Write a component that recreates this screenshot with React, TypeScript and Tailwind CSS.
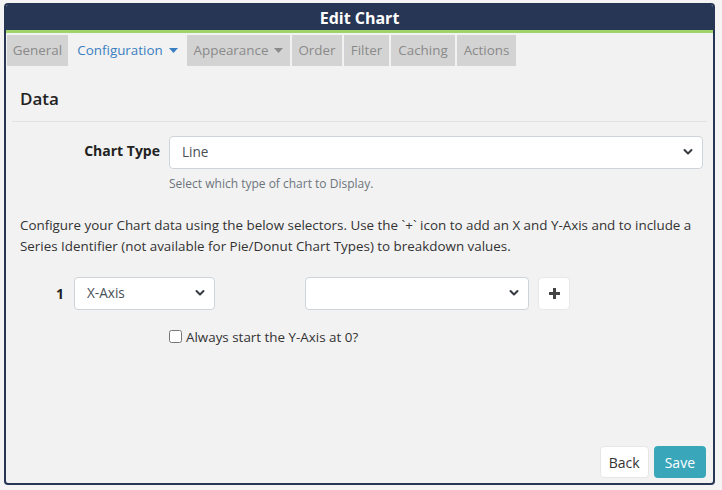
import { useState } from "react";

const TABS = [
  { key: "general", label: "General", w: "w-[61px]" },
  { key: "configuration", label: "Configuration", w: "w-[115px]", caret: true },
  { key: "appearance", label: "Appearance", w: "w-[103px]", caret: true },
  { key: "order", label: "Order", w: "w-[50px]" },
  { key: "filter", label: "Filter", w: "w-[45px]" },
  { key: "caching", label: "Caching", w: "w-[64px]" },
  { key: "actions", label: "Actions", w: "w-[59px]" },
] as const;

function Caret({ className }: { className?: string }) {
  return (
    <svg width="9" height="5" viewBox="0 0 9 5" className={className}>
      <path d="M0 0h9L4.5 5z" fill="currentColor" />
    </svg>
  );
}

function Chevron() {
  return (
    <svg
      width="10"
      height="7"
      viewBox="0 0 10 7"
      className="pointer-events-none absolute right-[10px] top-1/2 -translate-y-1/2 text-[#343a40]"
    >
      <path d="M1.5 1.5 5 5l3.5-3.5" fill="none" stroke="currentColor" strokeWidth="2" strokeLinecap="round" strokeLinejoin="round" />
    </svg>
  );
}

/** 下拉選單（註解：原生 select 搭配自繪箭頭）。 */
function Select({ value, options, className }: { value: string; options: string[]; className?: string }) {
  const [v, setV] = useState(value);
  return (
    <div className={`relative ${className ?? ""}`}>
      <select
        value={v}
        onChange={(e) => setV(e.target.value)}
        className="h-[33px] w-full appearance-none rounded-[4px] border border-[#ced4da] bg-white pl-[12px] pr-8 text-[13.6px] text-[#495057] outline-none"
      >
        {options.map((o) => (
          <option key={o} value={o}>
            {o}
          </option>
        ))}
      </select>
      <Chevron />
    </div>
  );
}

export default function App() {
  const [tab] = useState("configuration");

  return (
    <div className="min-h-screen bg-[#f4f4f4] pl-[4px] pt-[3px] font-['Open_Sans','Noto_Sans',sans-serif]">
      <div className="flex h-[482px] w-[711px] flex-col overflow-hidden rounded-[4px] border-2 border-[#283655] bg-[#f2f2f2]">
        <div className="flex h-[25px] items-center justify-center bg-[#283655] text-[16px] font-bold text-white">
          Edit Chart
        </div>
        <div className="h-[3px] bg-[#a0d468]" />

        <div className="flex gap-[2px] pl-[1px] pt-[2px]">
          {TABS.map((t) => {
            const active = t.key === tab;
            return (
              <div
                key={t.key}
                className={`flex h-[31px] items-center justify-center whitespace-nowrap text-[13.4px] ${t.w} ${
                  active ? "text-[#3a7fc1]" : "bg-[#d3d3d3] text-[#8a8a8a]"
                }`}
              >
                {t.label}
                {"caret" in t && t.caret ?
                  <Caret className={`ml-[6px] ${active ? "text-[#3a7fc1]" : "text-[#8a8a8a]"}`} />
                : null}
              </div>
            );
          })}
        </div>

        <div className="flex flex-1 flex-col">
          <h3 className="px-[14px] pt-[20px] text-[17px] font-semibold text-[#222]">Data</h3>
          <div className="mx-[6px] mt-[9px] border-t border-[#e2e2e2]" />

          <div className="mt-[14px] flex items-start">
            <label className="w-[154px] pt-[4px] text-right text-[14px] font-bold text-[#222]">Chart Type</label>
            <div className="ml-[9px] w-[534px]">
              <Select value="Line" options={["Line", "Bar", "Pie", "Donut"]} />
              <p className="mt-[6px] text-[12px] text-[#6c757d]">Select which type of chart to Display.</p>
            </div>
          </div>

          <p className="mt-[22px] px-[14px] text-[13.4px] leading-[21px] text-[#333]">
            Configure your Chart data using the below selectors. Use the `+` icon to add an X and Y-Axis and to include a
            Series Identifier (not available for Pie/Donut Chart Types) to breakdown values.
          </p>

          <div className="mt-[20px] flex items-center">
            <span className="w-[58px] text-right text-[14px] font-bold text-[#222]">1</span>
            <Select value="X-Axis" options={["X-Axis", "Y-Axis", "Series"]} className="ml-[10px] w-[141px]" />
            <Select value="" options={[""]} className="ml-[90px] w-[224px]" />
            <button className="ml-[9px] flex h-[33px] w-[32px] items-center justify-center rounded-[4px] border border-[#e8e8e8] bg-white">
              <svg width="11" height="11" viewBox="0 0 11 11">
                <path d="M5.5 0v11M0 5.5h11" stroke="#444" strokeWidth="3" />
              </svg>
            </button>
          </div>

          <label className="ml-[163px] mt-[17px] flex items-center gap-[4px] text-[13.4px] text-[#333]">
            <input type="checkbox" className="h-[13px] w-[13px]" />
            Always start the Y-Axis at 0?
          </label>

          <div className="mt-auto flex justify-end gap-[5px] pb-[5px] pr-[7px]">
            <button className="h-[32px] rounded-[4px] border border-[#e6e6e6] bg-white px-[8px] text-[14px] text-[#333]">
              Back
            </button>
            <button className="h-[32px] rounded-[4px] bg-[#3aa6b9] px-[11px] text-[14px] text-white">Save</button>
          </div>
        </div>
      </div>
    </div>
  );
}
